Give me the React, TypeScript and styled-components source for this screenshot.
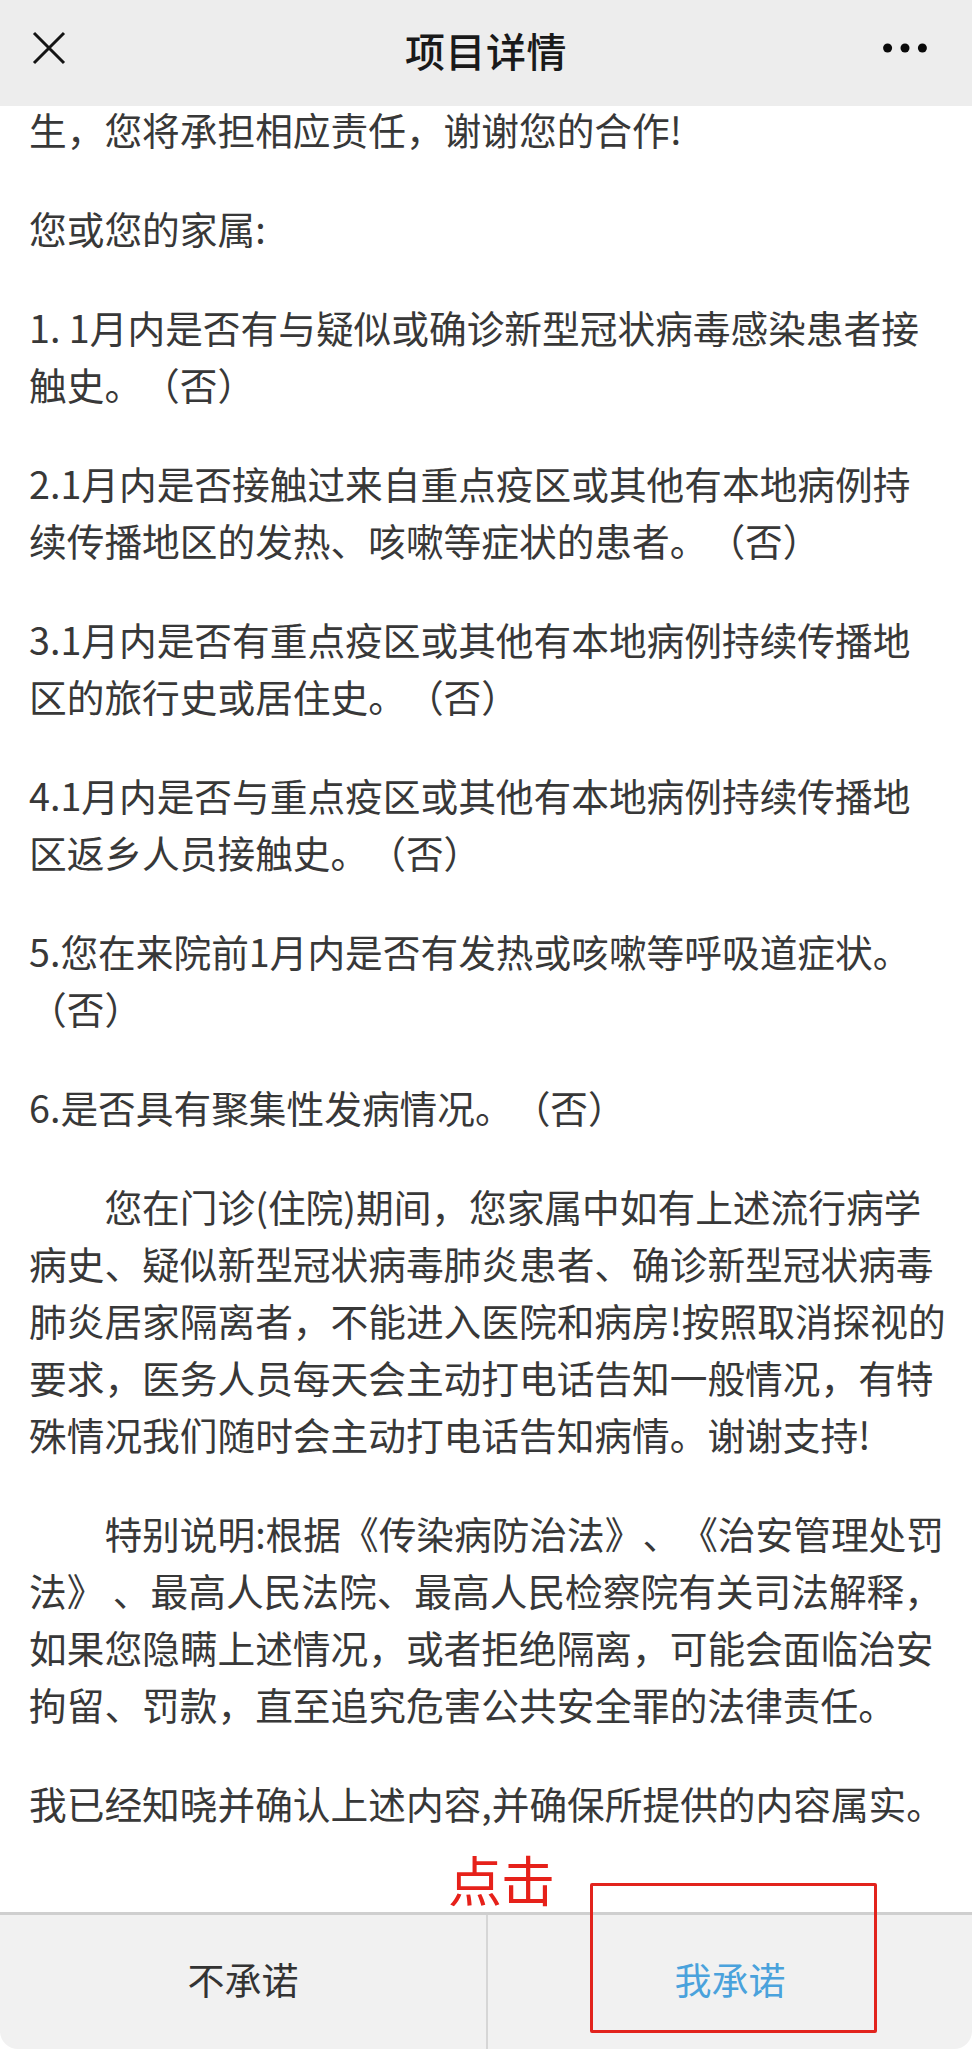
import React from "react";
import styled, { createGlobalStyle } from "styled-components";

const GlobalStyle = createGlobalStyle`
  html, body {
    margin: 0;
    padding: 0;
    background: #ffffff;
  }
  body {
    font-family: "Noto Sans CJK SC", "Noto Sans", sans-serif;
    -webkit-font-smoothing: antialiased;
    text-spacing-trim: space-all;
  }
  * { box-sizing: border-box; }
`;

const Page = styled.div`
  position: relative;
  height: 100vh;
  display: flex;
  flex-direction: column;
  overflow: hidden;
  background: #ffffff;
`;

const Header = styled.header`
  flex: 0 0 106px;
  height: 106px;
  background: #ededed;
  display: grid;
  grid-template-columns: 140px 1fr 140px;
  align-items: center;
  position: relative;
  z-index: 1;
`;

const CloseButton = styled.button`
  justify-self: start;
  margin: -10px 0 0 32px;
  padding: 0;
  border: 0;
  background: transparent;
  width: 34px;
  height: 34px;
  display: flex;
`;

const Title = styled.h1`
  margin: -6px 0 0;
  text-align: center;
  font-size: 40px;
  font-weight: 500;
  color: #1a1a1a;
  letter-spacing: 0.5px;
`;

const MoreButton = styled.button`
  justify-self: end;
  margin: -10px 45px 0 0;
  padding: 0;
  border: 0;
  background: transparent;
  display: flex;
`;

const Content = styled.main`
  flex: 1;
  overflow: hidden;
  padding: 2px 16px 0 29px;
  color: #383838;
  font-size: 37.7px;
  line-height: 57px;
  text-spacing-trim: space-all;
`;

const Paragraph = styled.p<{ $indent?: boolean; $first?: boolean }>`
  margin: ${(p) => (p.$first ? "-8px" : "0")} 0 42px;
  text-indent: ${(p) => (p.$indent ? "2em" : "0")};
  white-space: nowrap;
`;

const ActionBar = styled.footer`
  flex: 0 0 137px;
  height: 137px;
  display: grid;
  grid-template-columns: 1fr 1fr;
  background: #f1f1f1;
  border-top: 3px solid #cfcfcf;
  border-radius: 0 0 18px 18px;
`;

const ActionButton = styled.button<{ $primary?: boolean }>`
  border: 0;
  border-left: ${(p) => (p.$primary ? "2px solid #d6d6d6" : "0")};
  background: transparent;
  font-family: inherit;
  font-size: 37px;
  color: ${(p) => (p.$primary ? "#4aa2dc" : "#333333")};
  display: flex;
  align-items: center;
  justify-content: center;
  padding: 0 0 6px;
`;

const Callout = styled.div`
  position: absolute;
  left: 448px;
  bottom: 138px;
  font-size: 54px;
  line-height: 64px;
  font-weight: 400;
  color: #e6211a;
  letter-spacing: -1px;
`;

const Highlight = styled.div`
  position: absolute;
  left: 590px;
  bottom: 16px;
  width: 287px;
  height: 150px;
  border: 3px solid #e2231d;
  border-radius: 2px;
  pointer-events: none;
`;

type Para = { lines: string[]; indent?: boolean };

const paragraphs: Para[] = [
  { lines: ["生，您将承担相应责任，谢谢您的合作!"] },
  { lines: ["您或您的家属:"] },
  {
    lines: [
      "1. 1月内是否有与疑似或确诊新型冠状病毒感染患者接",
      "触史。（否）",
    ],
  },
  {
    lines: [
      "2.1月内是否接触过来自重点疫区或其他有本地病例持",
      "续传播地区的发热、咳嗽等症状的患者。（否）",
    ],
  },
  {
    lines: [
      "3.1月内是否有重点疫区或其他有本地病例持续传播地",
      "区的旅行史或居住史。（否）",
    ],
  },
  {
    lines: [
      "4.1月内是否与重点疫区或其他有本地病例持续传播地",
      "区返乡人员接触史。（否）",
    ],
  },
  {
    lines: ["5.您在来院前1月内是否有发热或咳嗽等呼吸道症状。", "（否）"],
  },
  { lines: ["6.是否具有聚集性发病情况。（否）"] },
  {
    indent: true,
    lines: [
      "您在门诊(住院)期间，您家属中如有上述流行病学",
      "病史、疑似新型冠状病毒肺炎患者、确诊新型冠状病毒",
      "肺炎居家隔离者，不能进入医院和病房!按照取消探视的",
      "要求，医务人员每天会主动打电话告知一般情况，有特",
      "殊情况我们随时会主动打电话告知病情。谢谢支持!",
    ],
  },
  {
    indent: true,
    lines: [
      "特别说明:根据《传染病防治法》、《治安管理处罚",
      "法》 、最高人民法院、最高人民检察院有关司法解释，",
      "如果您隐瞒上述情况，或者拒绝隔离，可能会面临治安",
      "拘留、罚款，直至追究危害公共安全罪的法律责任。",
    ],
  },
  { lines: ["我已经知晓并确认上述内容,并确保所提供的内容属实。"] },
];

const CloseIcon = () => (
  <svg width="34" height="34" viewBox="0 0 34 34" fill="none">
    <path
      d="M2 2 L32 32 M32 2 L2 32"
      stroke="#141414"
      strokeWidth="3"
      strokeLinecap="butt"
    />
  </svg>
);

const MoreIcon = () => (
  <svg width="44" height="10" viewBox="0 0 44 10" fill="#0a0a0a">
    <circle cx="4.6" cy="5" r="4.5" />
    <circle cx="22" cy="5" r="4.5" />
    <circle cx="39.4" cy="5" r="4.5" />
  </svg>
);

export default function App() {
  return (
    <>
      <GlobalStyle />
      <Page>
        <Header>
          <CloseButton aria-label="关闭">
            <CloseIcon />
          </CloseButton>
          <Title>项目详情</Title>
          <MoreButton aria-label="更多">
            <MoreIcon />
          </MoreButton>
        </Header>
        <Content>
          {paragraphs.map((p, i) => (
            <Paragraph key={i} $indent={p.indent} $first={i === 0}>
              {p.lines.map((line, j) => (
                <React.Fragment key={j}>
                  {j > 0 && <br />}
                  {line}
                </React.Fragment>
              ))}
            </Paragraph>
          ))}
        </Content>
        <ActionBar>
          <ActionButton>不承诺</ActionButton>
          <ActionButton $primary>我承诺</ActionButton>
        </ActionBar>
        <Callout>点击</Callout>
        <Highlight />
      </Page>
    </>
  );
}
